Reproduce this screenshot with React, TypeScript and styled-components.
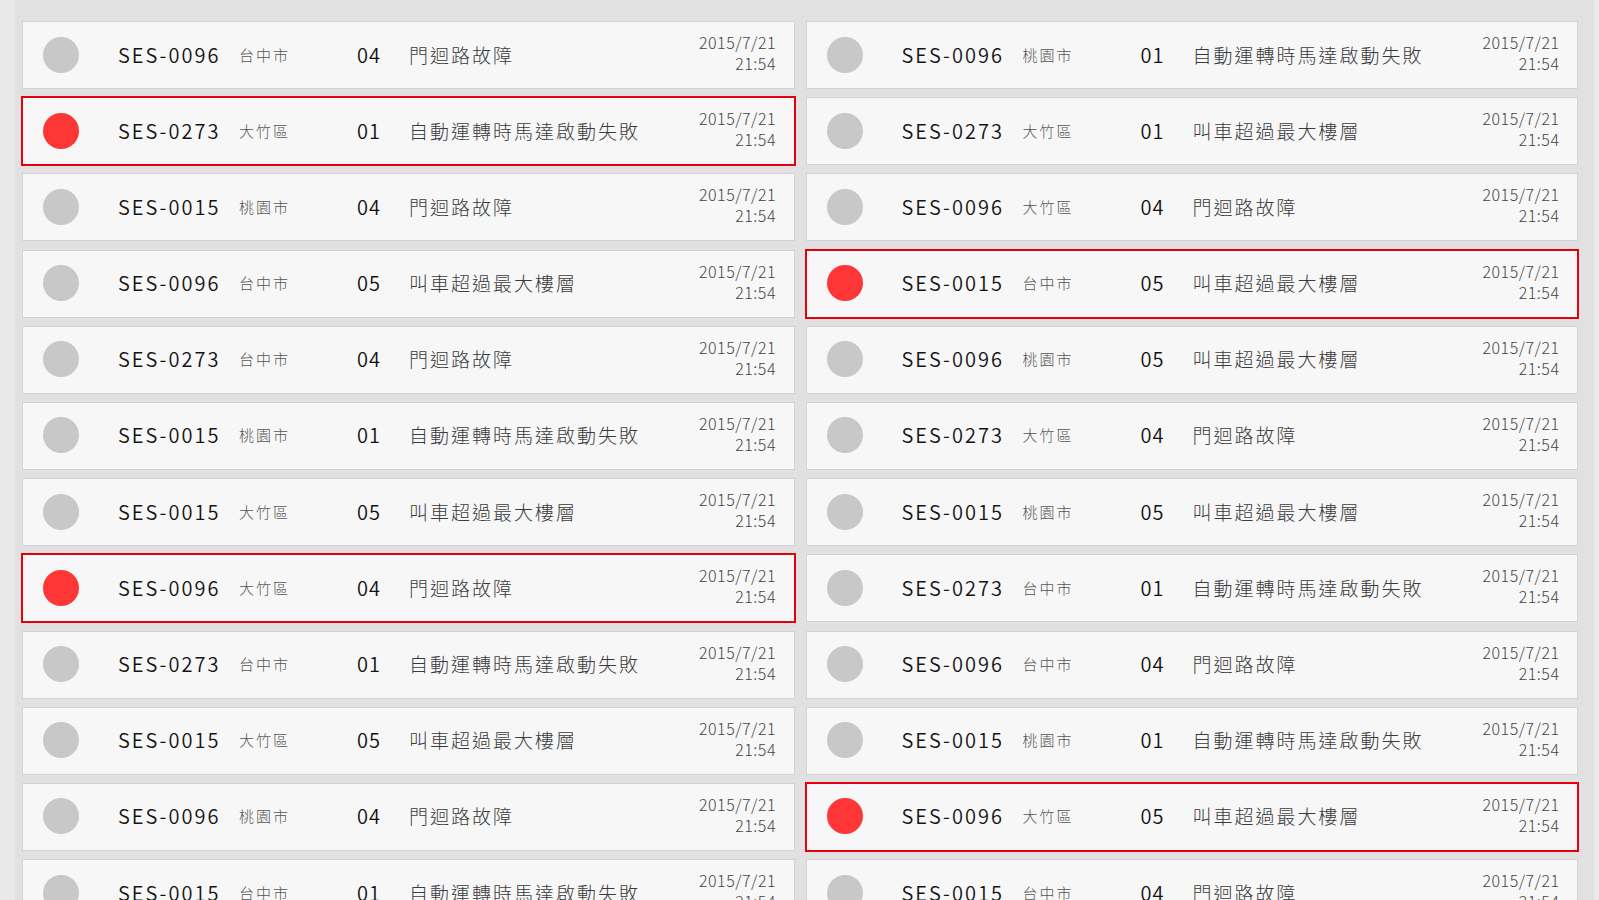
import React from "react";
import styled, { createGlobalStyle } from "styled-components";

const GlobalStyle = createGlobalStyle`
  html, body {
    margin: 0;
    padding: 0;
    height: 100%;
    overflow: hidden;
    background: #e9e9e9;
    font-family: "Noto Sans CJK TC", "Noto Sans", sans-serif;
  }
  #root { height: 100%; }
`;

const Board = styled.div`
  height: 100vh;
  margin: 0 5px 0 15px;
  padding: 21px 16px 0 7px;
  background: #e1e1e1;
  box-sizing: border-box;
  overflow: hidden;
`;

const Grid = styled.div`
  display: grid;
  grid-template-columns: 1fr 1fr;
  column-gap: 11px;
  row-gap: 8.2px;
`;

const Card = styled.div<{ $alarm: boolean }>`
  box-sizing: border-box;
  height: 68px;
  display: grid;
  grid-template-columns: 75px 121px 118px 52px 1fr auto;
  align-items: center;
  padding: 0 18px 2px 20px;
  background: #f7f7f7;
  border: 1px solid ${(p) => (p.$alarm ? "#e3000f" : "#d3d3d3")};
  box-shadow: ${(p) => (p.$alarm ? "0 0 0 1px #e3000f" : "none")};
`;

const Lamp = styled.div<{ $alarm: boolean }>`
  width: 36px;
  height: 36px;
  border-radius: 50%;
  margin-top: 1px;
  background: ${(p) => (p.$alarm ? "#ff3636" : "#c8c8c8")};
`;

const DeviceId = styled.div`
  font-size: 20px;
  font-weight: 350;
  letter-spacing: 2px;
  color: #141414;
  white-space: nowrap;
`;

const Location = styled.div`
  font-size: 15px;
  font-weight: 300;
  letter-spacing: 2px;
  color: #555555;
  white-space: nowrap;
`;

const Code = styled.div`
  font-size: 20px;
  font-weight: 350;
  letter-spacing: 1px;
  color: #111111;
`;

const Description = styled.div`
  font-size: 19px;
  font-weight: 300;
  letter-spacing: 2px;
  color: #3a3a3a;
  white-space: nowrap;
`;

const Stamp = styled.div`
  text-align: right;
  font-size: 16px;
  font-weight: 300;
  line-height: 21px;
  letter-spacing: 0.5px;
  color: #444444;
  white-space: nowrap;
  margin: -2px -0.5px 0 0;
`;

type Row = { alarm: boolean; id: string; loc: string; code: string; desc: string };

const D1 = "門迴路故障";
const D2 = "自動運轉時馬達啟動失敗";
const D3 = "叫車超過最大樓層";

const left: Row[] = [
  { alarm: false, id: "SES-0096", loc: "台中市", code: "04", desc: D1 },
  { alarm: true, id: "SES-0273", loc: "大竹區", code: "01", desc: D2 },
  { alarm: false, id: "SES-0015", loc: "桃園市", code: "04", desc: D1 },
  { alarm: false, id: "SES-0096", loc: "台中市", code: "05", desc: D3 },
  { alarm: false, id: "SES-0273", loc: "台中市", code: "04", desc: D1 },
  { alarm: false, id: "SES-0015", loc: "桃園市", code: "01", desc: D2 },
  { alarm: false, id: "SES-0015", loc: "大竹區", code: "05", desc: D3 },
  { alarm: true, id: "SES-0096", loc: "大竹區", code: "04", desc: D1 },
  { alarm: false, id: "SES-0273", loc: "台中市", code: "01", desc: D2 },
  { alarm: false, id: "SES-0015", loc: "大竹區", code: "05", desc: D3 },
  { alarm: false, id: "SES-0096", loc: "桃園市", code: "04", desc: D1 },
  { alarm: false, id: "SES-0015", loc: "台中市", code: "01", desc: D2 },
];

const right: Row[] = [
  { alarm: false, id: "SES-0096", loc: "桃園市", code: "01", desc: D2 },
  { alarm: false, id: "SES-0273", loc: "大竹區", code: "01", desc: D3 },
  { alarm: false, id: "SES-0096", loc: "大竹區", code: "04", desc: D1 },
  { alarm: true, id: "SES-0015", loc: "台中市", code: "05", desc: D3 },
  { alarm: false, id: "SES-0096", loc: "桃園市", code: "05", desc: D3 },
  { alarm: false, id: "SES-0273", loc: "大竹區", code: "04", desc: D1 },
  { alarm: false, id: "SES-0015", loc: "桃園市", code: "05", desc: D3 },
  { alarm: false, id: "SES-0273", loc: "台中市", code: "01", desc: D2 },
  { alarm: false, id: "SES-0096", loc: "台中市", code: "04", desc: D1 },
  { alarm: false, id: "SES-0015", loc: "桃園市", code: "01", desc: D2 },
  { alarm: true, id: "SES-0096", loc: "大竹區", code: "05", desc: D3 },
  { alarm: false, id: "SES-0015", loc: "台中市", code: "04", desc: D1 },
];

const rows: Row[] = left.flatMap((r, i) => [r, right[i]]);

export default function App() {
  return (
    <>
      <GlobalStyle />
      <Board>
        <Grid>
          {rows.map((r, i) => (
            <Card key={i} $alarm={r.alarm}>
              <Lamp $alarm={r.alarm} />
              <DeviceId>{r.id}</DeviceId>
              <Location>{r.loc}</Location>
              <Code>{r.code}</Code>
              <Description>{r.desc}</Description>
              <Stamp>
                2015/7/21
                <br />
                21:54
              </Stamp>
            </Card>
          ))}
        </Grid>
      </Board>
    </>
  );
}
